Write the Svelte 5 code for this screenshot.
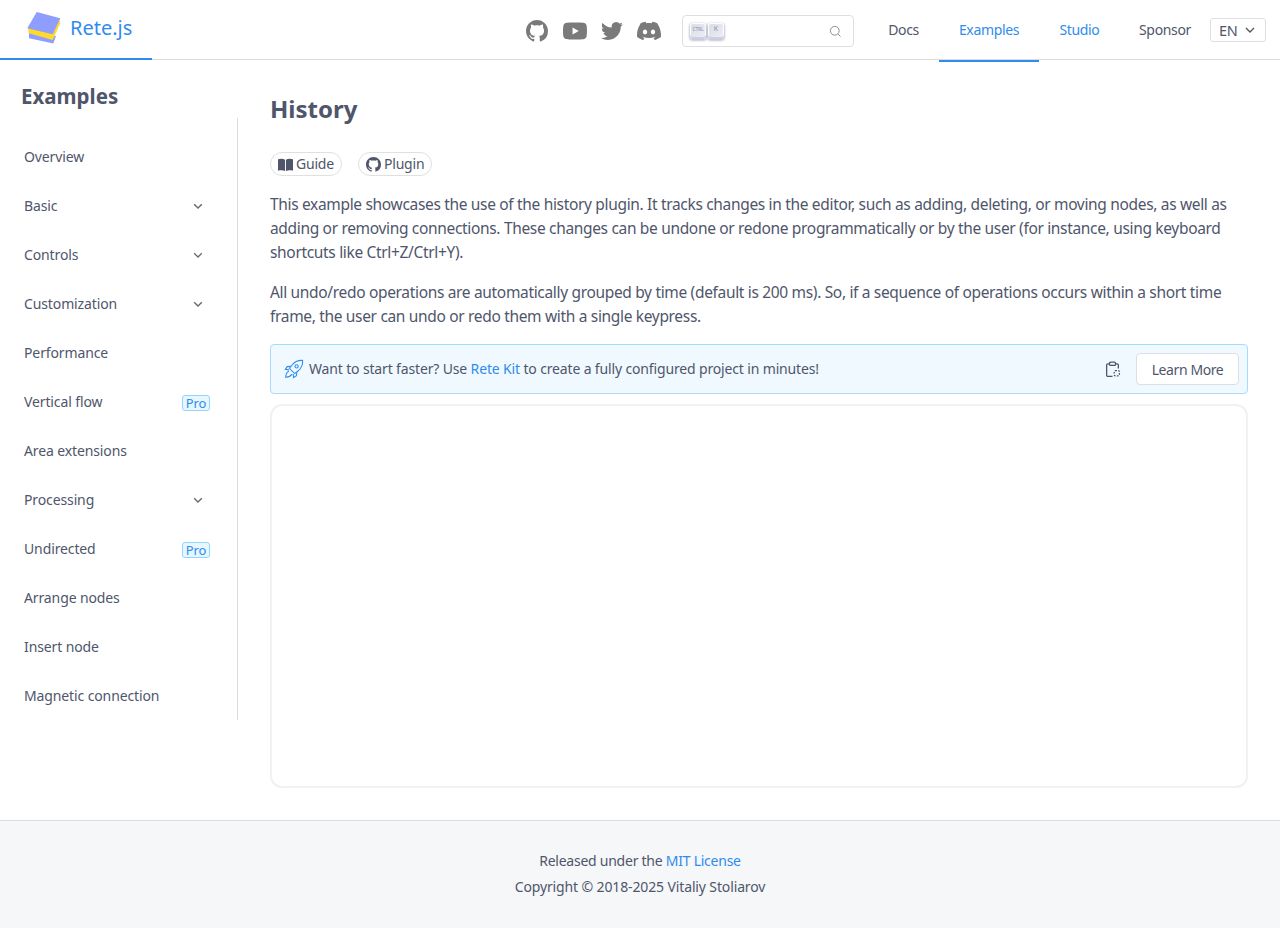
<script>
  const tabs = [
    { label: 'Docs', width: 71 },
    { label: 'Examples', width: 100, active: true },
    { label: 'Studio', width: 81, link: true },
    { label: 'Sponsor', width: 90 }
  ];
  const menu = [
    { label: 'Overview' },
    { label: 'Basic', more: true },
    { label: 'Controls', more: true },
    { label: 'Customization', more: true },
    { label: 'Performance' },
    { label: 'Vertical flow', pro: true },
    { label: 'Area extensions' },
    { label: 'Processing', more: true },
    { label: 'Undirected', pro: true },
    { label: 'Arrange nodes' },
    { label: 'Insert node' },
    { label: 'Magnetic connection' }
  ];
  const github = 'M8 0C3.58 0 0 3.58 0 8c0 3.54 2.29 6.53 5.47 7.59.4.07.55-.17.55-.38 0-.19-.01-.82-.01-1.49-2.01.37-2.53-.49-2.69-.94-.09-.23-.48-.94-.82-1.13-.28-.15-.68-.52-.01-.53.63-.01 1.08.58 1.23.82.72 1.21 1.87.87 2.33.66.07-.52.28-.87.51-1.07-1.78-.2-3.64-.89-3.64-3.95 0-.87.31-1.59.82-2.15-.08-.2-.36-1.02.08-2.12 0 0 .67-.21 2.2.82.64-.18 1.32-.27 2-.27.68 0 1.36.09 2 .27 1.53-1.04 2.2-.82 2.2-.82.44 1.1.16 1.92.08 2.12.51.56.82 1.27.82 2.15 0 3.07-1.87 3.75-3.65 3.95.29.25.54.73.54 1.48 0 1.07-.01 1.93-.01 2.2 0 .21.15.46.55.38A8.013 8.013 0 0016 8c0-4.42-3.58-8-8-8z';
</script>

<header>
  <a class="logo" href="#home">
    <svg width="36" height="34" viewBox="0 0 36 34">
      <polygon points="3,27.3 27.3,32.5 30,25 3,20" fill="#8f9dff" />
      <polygon points="2.7,22.3 26.7,29 34.3,12 33,7 2,17" fill="#ffd92c" />
      <polygon points="10.7,1 34.3,7.3 26.7,23.3 1.3,17.3" fill="#8f9dff" />
    </svg>
    <span>Rete.js</span>
  </a>
  <div class="socials">
    <svg class="gh" viewBox="0 0 16 16"><path d={github} /></svg>
    <svg class="yt" viewBox="0 0 24 24"><path d="M23.498 6.186a3.016 3.016 0 0 0-2.122-2.136C19.505 3.545 12 3.545 12 3.545s-7.505 0-9.377.505A3.017 3.017 0 0 0 .502 6.186C0 8.07 0 12 0 12s0 3.93.502 5.814a3.016 3.016 0 0 0 2.122 2.136c1.871.505 9.376.505 9.376.505s7.505 0 9.377-.505a3.015 3.015 0 0 0 2.122-2.136C24 15.93 24 12 24 12s0-3.93-.502-5.814zM9.545 15.568V8.432L15.818 12l-6.273 3.568z" /></svg>
    <svg class="tw" viewBox="0 0 24 24"><path d="M23.953 4.57a10 10 0 01-2.825.775 4.958 4.958 0 002.163-2.723c-.951.555-2.005.959-3.127 1.184a4.92 4.92 0 00-8.384 4.482C7.69 8.095 4.067 6.13 1.64 3.162a4.822 4.822 0 00-.666 2.475c0 1.71.87 3.213 2.188 4.096a4.904 4.904 0 01-2.228-.616v.06a4.923 4.923 0 003.946 4.827 4.996 4.996 0 01-2.212.085 4.936 4.936 0 004.604 3.417 9.867 9.867 0 01-6.102 2.105c-.39 0-.779-.023-1.17-.067a13.995 13.995 0 007.557 2.209c9.053 0 13.998-7.496 13.998-13.985 0-.21 0-.42-.015-.63A9.935 9.935 0 0024 4.59z" /></svg>
    <svg class="dc" viewBox="0 0 24 24"><path d="M20.317 4.3698a19.7913 19.7913 0 00-4.8851-1.5152.0741.0741 0 00-.0785.0371c-.211.3753-.4447.8648-.6083 1.2495-1.8447-.2762-3.68-.2762-5.4868 0-.1636-.3933-.4058-.8742-.6177-1.2495a.077.077 0 00-.0785-.037 19.7363 19.7363 0 00-4.8852 1.515.0699.0699 0 00-.0321.0277C.5334 9.0458-.319 13.5799.0992 18.0578a.0824.0824 0 00.0312.0561c2.0528 1.5076 4.0413 2.4228 5.9929 3.0294a.0777.0777 0 00.0842-.0276c.4616-.6304.8731-1.2952 1.226-1.9942a.076.076 0 00-.0416-.1057c-.6528-.2476-1.2743-.5495-1.8722-.8923a.077.077 0 01-.0076-.1277c.1258-.0943.2517-.1923.3718-.2914a.0743.0743 0 01.0776-.0105c3.9278 1.7933 8.18 1.7933 12.0614 0a.0739.0739 0 01.0785.0095c.1202.099.246.1981.3728.2924a.077.077 0 01-.0066.1276 12.2986 12.2986 0 01-1.873.8914.0766.0766 0 00-.0407.1067c.3604.698.7719 1.3628 1.225 1.9932a.076.076 0 00.0842.0286c1.961-.6067 3.9495-1.5219 6.0023-3.0294a.077.077 0 00.0313-.0552c.5004-5.177-.8382-9.6739-3.5485-13.6604a.061.061 0 00-.0312-.0286zM8.02 15.3312c-1.1825 0-2.1569-1.0857-2.1569-2.419 0-1.3332.9555-2.4189 2.157-2.4189 1.2108 0 2.1757 1.0952 2.1568 2.419 0 1.3332-.9555 2.4189-2.1569 2.4189zm7.9748 0c-1.1825 0-2.1569-1.0857-2.1569-2.419 0-1.3332.9554-2.4189 2.1569-2.4189 1.2108 0 2.1757 1.0952 2.1568 2.419 0 1.3332-.946 2.4189-2.1568 2.4189Z" /></svg>
  </div>
  <div class="search">
    <kbd class="ctrl">CTRL</kbd>
    <kbd>K</kbd>
    <svg class="glass" viewBox="0 0 14 14"><circle cx="6.2" cy="6.2" r="4.7" /><path d="M9.8 9.8l2.6 2.6" /></svg>
  </div>
  <nav>
    {#each tabs as tab}
      <a href="#tab" class="tab" class:active={tab.active} class:link={tab.link} style="width: {tab.width}px">{tab.label}</a>
    {/each}
  </nav>
  <div class="lang">
    EN
    <svg viewBox="0 0 12 12"><path d="M2 4l4 4 4-4" /></svg>
  </div>
</header>

<div class="page">
  <aside>
    <h2>Examples</h2>
    <ul>
      {#each menu as item}
        <li>
          <span>{item.label}</span>
          {#if item.pro}
            <em>Pro</em>
          {/if}
          {#if item.more}
            <svg viewBox="0 0 12 12"><path d="M2.2 4.2L6 8l3.8-3.8" /></svg>
          {/if}
        </li>
      {/each}
    </ul>
  </aside>

  <main>
    <h1>History</h1>
    <div class="tags">
      <a href="#guide" class="tag">
        <svg viewBox="0 0 16 14"><path d="M0 1.5C2.5.6 5.5.6 7.5 1.8V14C5.5 13 2.5 13 0 13.6zM16 1.5C13.5.6 10.5.6 8.5 1.8V14c2-1 5-1 7.5-.4z" /></svg>
        Guide
      </a>
      <a href="#plugin" class="tag">
        <svg viewBox="0 0 16 16"><path d={github} /></svg>
        Plugin
      </a>
    </div>
    <p>This example showcases the use of the history plugin. It tracks changes in the editor, such as adding, deleting, or moving nodes, as well as adding or removing connections. These changes can be undone or redone programmatically or by the user (for instance, using keyboard shortcuts like Ctrl+Z/Ctrl+Y).</p>
    <p>All undo/redo operations are automatically grouped by time (default is 200 ms). So, if a sequence of operations occurs within a short time frame, the user can undo or redo them with a single keypress.</p>
    <div class="alert">
      <svg class="rocket" viewBox="0 0 20 20">
        <path d="M18.6 1.4c-4.6-.3-8 1.3-10.6 4.6L5.4 9.3l5.3 5.3 3.3-2.6c3.3-2.6 4.9-6 4.6-10.6z" />
        <circle cx="12.6" cy="7.4" r="1.6" />
        <path d="M6.6 7.2L3.3 7.6 1.4 10.4l3.6.5M12.8 13.4l-.4 3.3-2.8 1.9-.5-3.6M5 12.3c-1.6.4-3 2.1-3.3 6 3.9-.3 5.6-1.7 6-3.3" />
      </svg>
      <span class="message">Want to start faster? Use <a href="#kit">Rete Kit</a> to create a fully configured project in minutes!</span>
      <svg class="clip" viewBox="0 0 16 16">
        <path d="M5 2.6H3.6A1.1 1.1 0 002.5 3.7v9.6a1.1 1.1 0 001.1 1.1H8M11 2.6h1.4a1.1 1.1 0 011.1 1.1V7" />
        <rect x="5.2" y="1" width="5.6" height="3.2" rx="1" />
        <rect x="9.6" y="9" width="4.9" height="4.9" rx="1" stroke-dasharray="1.6 1.2" />
      </svg>
      <button>Learn More</button>
    </div>
    <div class="canvas"></div>
  </main>
</div>

<footer>
  <div class="released">Released under the <a href="#mit">MIT License</a></div>
  <div>Copyright © 2018-2025 Vitaliy Stoliarov</div>
</footer>

<style>
  :global(body) {
    font-family: "Noto Sans", sans-serif;
    color: #4f566b;
    background: #fff;
  }

  a {
    text-decoration: none;
    color: #2f8ced;
  }

  header {
    display: flex;
    align-items: center;
    height: 59px;
    border-bottom: 1px solid #dcdcdc;
  }

  .logo {
    align-self: stretch;
    box-sizing: border-box;
    width: 152px;
    display: flex;
    align-items: center;
    gap: 8px;
    padding-left: 26px;
    font-size: 20px;
    border-bottom: 2px solid #2f8ced;
    margin-bottom: -1px;
  }

  .logo svg {
    margin-top: -2px;
  }

  .logo span {
    margin-top: -4px;
  }

  .socials {
    margin-left: auto;
    display: flex;
    align-items: center;
    gap: 14px;
    fill: #7a7a7a;
    margin-top: 2px;
  }

  .gh {
    width: 22px;
    height: 22px;
    margin-right: 1px;
  }
  .yt {
    width: 24px;
    height: 24px;
  }
  .tw {
    width: 22px;
    height: 22px;
  }
  .dc {
    width: 24px;
    height: 24px;
  }

  .search {
    box-sizing: border-box;
    width: 172px;
    height: 32px;
    margin: 3px 14px 0 21px;
    padding: 0 11px 0 7px;
    display: flex;
    align-items: center;
    gap: 2px;
    border: 1px solid #dedfe3;
    border-radius: 4px;
  }

  kbd {
    box-sizing: border-box;
    width: 16px;
    height: 16px;
    display: flex;
    justify-content: center;
    padding-top: 2px;
    font: 7px/8px "Noto Sans", sans-serif;
    color: #8a90a8;
    background: linear-gradient(-225deg, #d5dbe4, #f0f0f6);
    border-radius: 3px;
    box-shadow: inset 0 -2px 0 0 #cdcde6, inset 0 0 1px 1px #fff, 0 1px 2px 1px rgba(30, 35, 90, 0.25);
  }

  .ctrl {
    font-size: 5px;
    letter-spacing: -0.2px;
  }

  .glass {
    width: 13px;
    height: 13px;
    margin-left: auto;
    fill: none;
    stroke: #858585;
    stroke-width: 1;
  }

  nav {
    display: flex;
    align-self: stretch;
  }

  .tab {
    box-sizing: border-box;
    height: 62px;
    padding-bottom: 3px;
    display: flex;
    align-items: center;
    justify-content: center;
    font-size: 14px;
    letter-spacing: -0.35px;
    color: #4f566b;
  }

  .tab.link,
  .tab.active {
    color: #2f8ced;
  }

  .tab.active {
    border-bottom: 2px solid #2f8ced;
    padding-bottom: 1px;
  }

  .lang {
    box-sizing: border-box;
    width: 56px;
    height: 24px;
    margin: 1px 14px 0 0;
    padding-left: 8px;
    display: flex;
    align-items: center;
    gap: 6px;
    font-size: 14.5px;
    letter-spacing: -0.2px;
    border: 1px solid #dedfe3;
    border-radius: 3px;
  }

  .lang svg {
    width: 12px;
    height: 12px;
    fill: none;
    stroke: #555;
    stroke-width: 1.3;
  }

  .page {
    display: flex;
    height: 760px;
  }

  aside {
    box-sizing: border-box;
    width: 238px;
    flex: none;
    padding-top: 20px;
  }

  h2 {
    margin: 0 0 6px 21px;
    font-size: 20.5px;
    line-height: 32px;
    color: #4f566b;
  }

  ul {
    list-style: none;
    margin: 0;
    padding: 0 0 0 24px;
    height: 602px;
    border-right: 1px solid #dcdcdc;
    box-sizing: border-box;
  }

  li {
    position: relative;
    height: 49px;
    padding-right: 27px;
    display: flex;
    align-items: center;
    justify-content: space-between;
    font-size: 14px;
    letter-spacing: -0.12px;
    top: 14px;
  }

  li svg {
    width: 12px;
    height: 12px;
    margin-right: 6px;
    fill: none;
    stroke: #666;
    stroke-width: 1.3;
  }

  em {
    box-sizing: border-box;
    width: 28px;
    height: 16px;
    margin-top: 2px;
    font: 13px/15px "Noto Sans", sans-serif;
    text-align: center;
    color: #2f8ced;
    background: #e6f7ff;
    border: 1px solid #91d5ff;
    border-radius: 3px;
  }

  main {
    box-sizing: border-box;
    width: 978px;
    margin-left: 32px;
    padding-top: 31px;
  }

  h1 {
    margin: 0 0 25px;
    font-size: 24px;
    line-height: 36px;
    color: #4f566b;
  }

  .tags {
    display: flex;
    gap: 16px;
  }

  .tag {
    box-sizing: border-box;
    height: 24px;
    padding: 0 7px 1px;
    display: flex;
    align-items: center;
    gap: 3px;
    font-size: 14px;
    letter-spacing: -0.2px;
    color: #4f566b;
    border: 1px solid #e0e0e0;
    border-radius: 12px;
  }

  .tag svg {
    width: 15px;
    height: 15px;
    margin-top: 1px;
    fill: #4f566b;
  }

  p {
    margin: 16px 0;
    font-size: 15.5px;
    letter-spacing: -0.33px;
    line-height: 24px;
  }

  .alert {
    box-sizing: border-box;
    height: 50px;
    padding: 0 8px 0 13px;
    display: flex;
    align-items: center;
    font-size: 14px;
    background: #f0f9ff;
    border: 1px solid #a8dcff;
    border-radius: 4px;
  }

  .rocket {
    width: 20px;
    height: 20px;
    margin-right: 5px;
    fill: none;
    stroke: #2f8ced;
    stroke-width: 1.1;
  }

  .message {
    flex: 1;
    margin-top: -2px;
    letter-spacing: -0.15px;
  }

  .clip {
    width: 17px;
    height: 17px;
    margin-right: 15px;
    fill: none;
    stroke: #4f566b;
    stroke-width: 1.2;
  }

  button {
    box-sizing: border-box;
    width: 103px;
    height: 32px;
    font: 14px "Noto Sans", sans-serif;
    letter-spacing: -0.4px;
    color: #4f566b;
    background: #fff;
    border: 1px solid #dcdfe6;
    border-radius: 4px;
  }

  .canvas {
    box-sizing: border-box;
    height: 384px;
    margin-top: 10px;
    border: 2px solid #f1f1f1;
    border-radius: 12px;
  }

  footer {
    box-sizing: border-box;
    height: 108px;
    padding-top: 27px;
    font-size: 14px;
    letter-spacing: -0.13px;
    line-height: 26px;
    text-align: center;
    background: #f6f7f9;
    border-top: 1px solid #dcdcdc;
  }

  .released {
    letter-spacing: -0.25px;
  }
</style>
